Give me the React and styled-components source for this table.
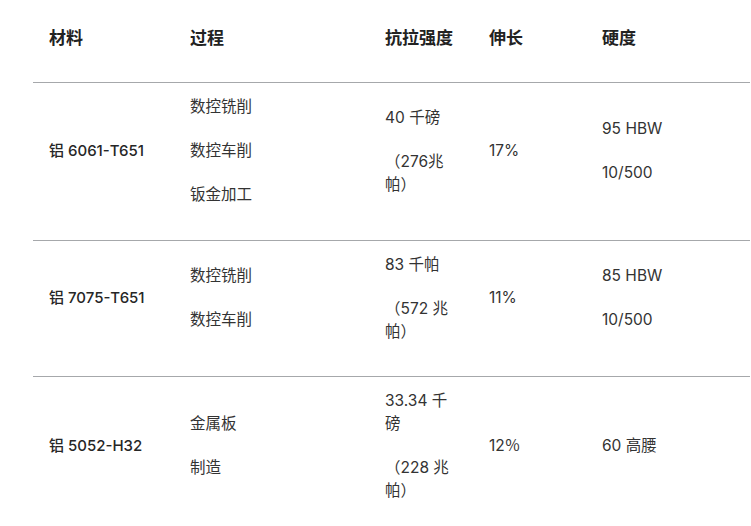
import React from "react";
import styled, { createGlobalStyle } from "styled-components";

const Global = createGlobalStyle`
  html, body { margin: 0; padding: 0; background: #fff; overflow: hidden; }
  body { font-family: "Inter", "Noto Sans CJK SC", sans-serif; color: #333; }
`;

const Wrap = styled.div`
  padding-left: 33px;
  width: 718px;
`;

const Table = styled.table`
  width: 717px;
  border-collapse: collapse;
  table-layout: fixed;
`;

const Th = styled.th`
  text-align: left;
  font-family: "Noto Sans CJK SC", sans-serif;
  font-weight: 700;
  font-size: 17px;
  line-height: 24px;
  color: #222;
  padding: 25px 16px 33px;
  vertical-align: top;
`;

const HeadRow = styled.tr`
  border-bottom: 1px solid #a6a8ab;
`;

const Row = styled.tr`
  border-bottom: ${(p) => (p.$last ? "none" : "1px solid #a6a8ab")};
`;

const Td = styled.td`
  padding: 12px 16px 12.5px;
  vertical-align: middle;
  color: #333;
`;

const Para = styled.p`
  margin: 0 0 21px;
  line-height: 23px;
  font-weight: ${(p) => (p.$strong ? 500 : 400)};
  font-size: ${(p) => (p.$strong ? "15px" : "15.5px")};
  color: ${(p) => (p.$strong ? "#262626" : "#333")};
`;

const rows = [
  {
    mat: "铝 6061-T651",
    proc: ["数控铣削", "数控车削", "钣金加工"],
    ten: ["40 千磅", "（276兆帕）"],
    el: "17%",
    hard: ["95 HBW", "10/500"],
  },
  {
    mat: "铝 7075-T651",
    proc: ["数控铣削", "数控车削"],
    ten: ["83 千帕", "（572 兆帕）"],
    el: "11%",
    hard: ["85 HBW", "10/500"],
  },
  {
    mat: "铝 5052-H32",
    proc: ["金属板", "制造"],
    ten: ["33.34 千磅", "（228 兆帕）"],
    el: "12％",
    hard: ["60 高腰"],
  },
];

export default function App() {
  return (
    <Wrap>
      <Global />
      <Table>
        <colgroup>
          <col style={{ width: 141 }} />
          <col style={{ width: 195 }} />
          <col style={{ width: 104 }} />
          <col style={{ width: 113 }} />
          <col />
        </colgroup>
        <thead>
          <HeadRow>
            <Th>材料</Th>
            <Th>过程</Th>
            <Th>抗拉强度</Th>
            <Th>伸长</Th>
            <Th>硬度</Th>
          </HeadRow>
        </thead>
        <tbody>
          {rows.map((r, i) => (
            <Row key={i} $last={i === rows.length - 1}>
              <Td>
                <Para $strong>{r.mat}</Para>
              </Td>
              <Td>
                {r.proc.map((t) => (
                  <Para key={t}>{t}</Para>
                ))}
              </Td>
              <Td>
                {r.ten.map((t) => (
                  <Para key={t}>{t}</Para>
                ))}
              </Td>
              <Td>
                <Para>{r.el}</Para>
              </Td>
              <Td>
                {r.hard.map((t) => (
                  <Para key={t}>{t}</Para>
                ))}
              </Td>
            </Row>
          ))}
        </tbody>
      </Table>
    </Wrap>
  );
}
